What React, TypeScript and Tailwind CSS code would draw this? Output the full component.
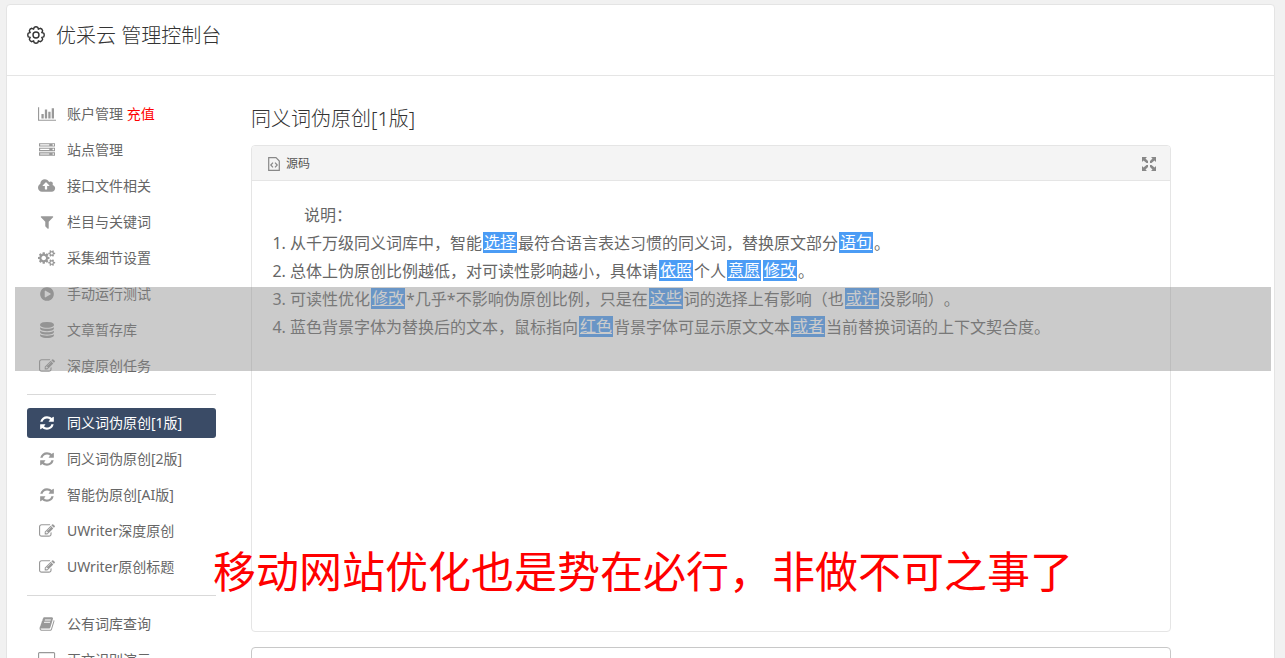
import type { ReactNode } from "react";

interface IconShape {
  width: number;
  d: string;
}

// Glyphs sit on a 1792 unit em, wide ones have a larger advance
const ICONS: Record<string, IconShape> = {
  chart: {
    width: 2048,
    d: "M640 896v512h-256v-512h256zm384-512v1024h-256v-1024h256zm1024 1152v128h-2048v-1536h128v1408h1920zm-640-896v768h-256v-768h256zm384-384v1152h-256v-1152h256z",
  },
  server: {
    width: 1792,
    d: "M128 1408h1024v-128h-1024v128zm0-512h1024v-128h-1024v128zm1568 448q0-40-28-68t-68-28-68 28-28 68 28 68 68 28 68-28 28-68zm-1568-960h1024v-128h-1024v128zm1568 448q0-40-28-68t-68-28-68 28-28 68 28 68 68 28 68-28 28-68zm0-512q0-40-28-68t-68-28-68 28-28 68 28 68 68 28 68-28 28-68zm96 832v384h-1792v-384h1792zm0-512v384h-1792v-384h1792zm0-512v384h-1792v-384h1792z",
  },
  upload: {
    width: 1920,
    d: "M1280 864q0-14-9-23l-352-352q-9-9-23-9t-23 9l-351 351q-10 12-10 24 0 14 9 23t23 9h224v352q0 13 9.5 22.5t22.5 9.5h192q13 0 22.5-9.5t9.5-22.5v-352h224q13 0 22.5-9.5t9.5-22.5zm640 288q0 159-112.5 271.5t-271.5 112.5h-1088q-185 0-316.5-131.5t-131.5-316.5q0-130 70-240t188-165q-2-30-2-43 0-212 150-362t362-150q156 0 285.5 87t188.5 231q71-62 166-62 106 0 181 75t75 181q0 76-41 138 130 31 213.5 135.5t83.5 238.5z",
  },
  filter: {
    width: 1792,
    d: "M1595 295q17 41-14 70l-493 493v742q0 42-39 59-13 5-25 5-27 0-45-19l-256-256q-19-19-19-45v-486l-493-493q-31-29-14-70 17-39 59-39h1280q42 0 59 39z",
  },
  cogs: {
    width: 1920,
    d: "M896 896q0-106-75-181t-181-75-181 75-75 181 75 181 181 75 181-75 75-181zm768 512q0-52-38-90t-90-38-90 38-38 90q0 53 37.5 90.5t90.5 37.5 90.5-37.5 37.5-90.5zm0-1024q0-52-38-90t-90-38-90 38-38 90q0 53 37.5 90.5t90.5 37.5 90.5-37.5 37.5-90.5zm-384 421v185q0 10-7 19.5t-16 10.5l-155 24q-11 35-32 76 34 48 90 115 7 11 7 20 0 12-7 19-23 30-82.5 89.5t-78.5 59.5q-11 0-21-7l-115-90q-37 19-77 31-11 108-23 155-7 24-30 24h-186q-11 0-20-7.5t-10-17.5l-23-153q-34-10-75-31l-118 89q-7 7-20 7-11 0-21-8-144-133-144-160 0-9 7-19 10-14 41-53t47-61q-23-44-35-82l-152-24q-10-1-17-9.5t-7-19.5v-185q0-10 7-19.5t16-10.5l155-24q11-35 32-76-34-48-90-115-7-11-7-20 0-12 7-20 22-30 82-89t79-59q11 0 21 7l115 90q34-18 77-32 11-108 23-154 7-24 30-24h186q11 0 20 7.5t10 17.5l23 153q34 10 75 31l118-89q8-7 20-7 11 0 21 8 144 133 144 160 0 8-7 19-12 16-42 54t-45 60q23 48 34 82l152 23q10 2 17 10.5t7 19.5zm640 533v140q0 16-149 31-12 27-30 52 51 113 51 138 0 4-4 7-122 71-124 71-8 0-46-47t-52-68q-20 2-30 2t-30-2q-14 21-52 68t-46 47q-2 0-124-71-4-3-4-7 0-25 51-138-18-25-30-52-149-15-149-31v-140q0-16 149-31 13-29 30-52-51-113-51-138 0-4 4-7 4-2 35-20t59-34 30-16q8 0 46 46.5t52 67.5q20-2 30-2t30 2q51-71 92-112l6-2q4 0 124 70 4 3 4 7 0 25-51 138 17 23 30 52 149 15 149 31zm0-1024v140q0 16-149 31-12 27-30 52 51 113 51 138 0 4-4 7-122 71-124 71-8 0-46-47t-52-68q-20 2-30 2t-30-2q-14 21-52 68t-46 47q-2 0-124-71-4-3-4-7 0-25 51-138-18-25-30-52-149-15-149-31v-140q0-16 149-31 13-29 30-52-51-113-51-138 0-4 4-7 4-2 35-20t59-34 30-16q8 0 46 46.5t52 67.5q20-2 30-2t30 2q51-71 92-112l6-2q4 0 124 70 4 3 4 7 0 25-51 138 17 23 30 52 149 15 149 31z",
  },
  play: {
    width: 1792,
    d: "M896 128q209 0 385.5 103t279.5 279.5 103 385.5-103 385.5-279.5 279.5-385.5 103-385.5-103-279.5-279.5-103-385.5 103-385.5 279.5-279.5 385.5-103zm384 823q32-18 32-55t-32-55l-544-320q-31-19-64-1-32 19-32 56v640q0 37 32 56 16 8 32 8 17 0 32-9z",
  },
  database: {
    width: 1792,
    d: "M896 768q237 0 443-43t325-127v170q0 69-103 128t-280 93.5-385 34.5-385-34.5-280-93.5-103-128v-170q119 84 325 127t443 43zm0 768q237 0 443-43t325-127v170q0 69-103 128t-280 93.5-385 34.5-385-34.5-280-93.5-103-128v-170q119 84 325 127t443 43zm0-384q237 0 443-43t325-127v170q0 69-103 128t-280 93.5-385 34.5-385-34.5-280-93.5-103-128v-170q119 84 325 127t443 43zm0-1152q208 0 385 34.5t280 93.5 103 128v128q0 69-103 128t-280 93.5-385 34.5-385-34.5-280-93.5-103-128v-128q0-69 103-128t280-93.5 385-34.5z",
  },
  edit: {
    width: 1792,
    d: "M888 1184l116-116-152-152-116 116v56h96v96h56zm440-720q-16-16-33 1l-350 350q-17 17-1 33t33-1l350-350q17-17 1-33zm80 594v190q0 119-84.5 203.5t-203.5 84.5h-832q-119 0-203.5-84.5t-84.5-203.5v-832q0-119 84.5-203.5t203.5-84.5h832q63 0 117 25 15 7 18 23 3 17-9 29l-49 49q-14 14-32 8-23-6-45-6h-832q-66 0-113 47t-47 113v832q0 66 47 113t113 47h832q66 0 113-47t47-113v-126q0-13 9-22l64-64q15-15 35-7t20 29zm-96-738l288 288-672 672h-288v-288zm444 132l-92 92-288-288 92-92q28-28 68-28t68 28l152 152q28 28 28 68t-28 68z",
  },
  refresh: {
    width: 1792,
    d: "M1639 1056q0 5-1 7-64 268-268 434.5t-478 166.5q-146 0-282.5-55t-243.5-157l-129 129q-19 19-45 19t-45-19-19-45v-448q0-26 19-45t45-19h448q26 0 45 19t19 45-19 45l-137 137q71 66 161 102t187 36q134 0 250-65t186-179q11-17 53-117 8-23 30-23h192q13 0 22.5 9.5t9.5 22.5zm25-800v448q0 26-19 45t-45 19h-448q-26 0-45-19t-19-45 19-45l138-138q-148-137-349-137-134 0-250 65t-186 179q-11 17-53 117-8 23-30 23h-199q-13 0-22.5-9.5t-9.5-22.5v-7q65-268 270-434.5t480-166.5q146 0 284 55.5t245 156.5l130-129q19-19 45-19t45 19 19 45z",
  },
  book: {
    width: 1792,
    d: "M1703 478q40 57 18 129l-275 906q-19 64-76.5 107.5t-122.5 43.5h-923q-77 0-148.5-53.5t-99.5-131.5q-24-67-2-127 0-4 3-27t4-37q1-8-3-21.5t-3-19.5q2-11 8-21t16.5-23.5 16.5-23.5q23-38 45-91.5t30-91.5q3-10 .5-30t-.5-28q3-11 17-28t17-23q21-36 42-92t25-90q1-9-2.5-32t.5-28q4-13 22-30.5t22-22.5q19-26 42.5-84.5t27.5-96.5q1-8-3-25.5t-2-26.5q2-8 9-18t18-23 17-21q8-12 16.5-30.5t15-35 16-36 19.5-32 26.5-23.5 36-11.5 47.5 5.5l-1 3q38-9 51-9h761q74 0 114 56t18 130l-274 906q-36 119-71.5 153.5t-128.5 34.5h-869q-27 0-38 15-11 16-1 43 24 70 144 70h923q29 0 56-15.5t35-41.5l300-987q7-22 5-57 38 15 59 43zm-1064 2q-4 13 2 22.5t20 9.5h608q13 0 25.5-9.5t16.5-22.5l21-64q4-13-2-22.5t-20-9.5h-608q-13 0-25.5 9.5t-16.5 22.5zm-83 256q-4 13 2 22.5t20 9.5h608q13 0 25.5-9.5t16.5-22.5l21-64q4-13-2-22.5t-20-9.5h-608q-13 0-25.5 9.5t-16.5 22.5z",
  },
  desktop: {
    width: 1920,
    d: "M1792 992v-832q0-13-9.500-22.500t-22.500-9.500h-1600q-13 0-22.500 9.500t-9.500 22.500v832q0 13 9.500 22.500t22.500 9.500h1600q13 0 22.500-9.500t9.500-22.500zm128-832v1088q0 66-47 113t-113 47h-544q0 37 16 77.500t32 71 16 43.500q0 26-19 45t-45 19h-512q-26 0-45-19t-19-45q0-14 16-44t32-70 16-78h-544q-66 0-113-47t-47-113v-1088q0-66 47-113t113-47h1600q66 0 113 47t47 113z",
  },
};

interface NavItem {
  icon: string;
  label: string;
  tag?: string;
  active?: boolean;
}

const NAV_GROUPS: NavItem[][] = [
  [
    { icon: "chart", label: "账户管理", tag: "充值" },
    { icon: "server", label: "站点管理" },
    { icon: "upload", label: "接口文件相关" },
    { icon: "filter", label: "栏目与关键词" },
    { icon: "cogs", label: "采集细节设置" },
    { icon: "play", label: "手动运行测试" },
    { icon: "database", label: "文章暂存库" },
    { icon: "edit", label: "深度原创任务" },
  ],
  [
    { icon: "refresh", label: "同义词伪原创[1版]", active: true },
    { icon: "refresh", label: "同义词伪原创[2版]" },
    { icon: "refresh", label: "智能伪原创[AI版]" },
    { icon: "edit", label: "UWriter深度原创" },
    { icon: "edit", label: "UWriter原创标题" },
  ],
  [
    { icon: "book", label: "公有词库查询" },
    { icon: "desktop", label: "正文识别演示" },
  ],
];

function NavIcon({ name }: { name: string }) {
  const { width, d } = ICONS[name];
  return (
    <svg viewBox={`0 0 ${width} 1792`} className="h-4 w-auto" fill="currentColor" aria-hidden="true">
      <path d={d} />
    </svg>
  );
}

function GearIcon() {
  return (
    <svg viewBox="0 0 18 18" className="size-[18px]" fill="none" stroke="currentColor" strokeWidth="1.4" aria-hidden="true">
      <path
        strokeLinejoin="round"
        d="M7.200 1.300Q9 .3 10.800 1.300L11.400 3.200L13.200 2.300Q15.200 2.800 15.700 4.800L14.800 6.600L16.700 7.200Q17.700 9 16.700 10.800L14.800 11.400L15.700 13.200Q15.200 15.200 13.200 15.700L11.400 14.800L10.800 16.700Q9 17.700 7.200 16.700L6.600 14.800L4.800 15.700Q2.800 15.200 2.300 13.200L3.200 11.400L1.300 10.800Q.3 9 1.300 7.200L3.200 6.600L2.300 4.800Q2.800 2.800 4.800 2.300L6.600 3.200Z"
      />
      <circle cx="9" cy="9" r="3" />
    </svg>
  );
}

function SourceIcon() {
  return (
    <svg viewBox="0 0 12 14" className="h-3.5 w-3" fill="none" stroke="#888" strokeWidth="1.2" aria-hidden="true">
      <path d="M.7.7h7.300l3.300 3.300v9.300H.7z" />
      <path d="M5 5.700 2.800 8 5 10.300M7 5.700 9.200 8 7 10.300" />
    </svg>
  );
}

function ExpandIcon() {
  return (
    <svg viewBox="0 0 14 14" className="size-3.5" fill="#888" aria-hidden="true">
      <path d="M0 0h5L3.500 1.500 6 4v2H4.500L1.500 3.500 0 5zM14 0v5l-1.500-1.500L9.500 6H8V4l2.500-2.500L9 0zM0 14V9l1.500 1.500L4.500 8H6v2l-2.500 2.500L5 14zM14 14H9l1.500-1.500L8 10V8h1.500l3 2.500L14 9z" />
    </svg>
  );
}

function Swap({ children }: { children: ReactNode }) {
  return (
    <span className="mx-px inline-block h-[21px] bg-[#4b9cf5] px-px align-top mt-[3px] leading-[21px] text-white underline">
      {children}
    </span>
  );
}

function Sidebar() {
  return (
    <nav className="w-[189px] shrink-0 pt-[23px] text-sm">
      {NAV_GROUPS.map((group, i) => (
        <div key={i}>
          {i > 0 && <hr className="my-[13px] border-[#d9d9d9]" />}
          <ul className="flex flex-col gap-1.5">
            {group.map((item) => (
              <li key={item.label}>
                <a
                  href="#"
                  className={`flex h-[30px] items-center gap-2.5 rounded-[3px] px-2.5 ${
                    item.active ? "bg-[#3a4b66] text-white" : "text-[#666]"
                  }`}
                >
                  <span className={`flex w-5 shrink-0 justify-center ${item.active ? "text-white" : "text-[#999]"}`}>
                    <NavIcon name={item.icon} />
                  </span>
                  <span>
                    {item.label}
                    {item.tag && <span className="text-[#f00]"> {item.tag}</span>}
                  </span>
                </a>
              </li>
            ))}
          </ul>
        </div>
      ))}
    </nav>
  );
}

function Editor() {
  return (
    <section className="rounded-[4px] border border-[#e5e5e5]">
      <div className="flex h-[35px] items-center justify-between rounded-t-[3px] border-b border-[#e5e5e5] bg-[#f4f4f4] pt-0.5 pr-3.5 pl-4">
        <button type="button" className="flex items-center gap-1.5 text-xs text-[#555]">
          <SourceIcon />
          源码
        </button>
        <button type="button" aria-label="全屏">
          <ExpandIcon />
        </button>
      </div>
      <div className="min-h-[450px] p-5 text-base leading-7 text-[#666]">
        <p className="indent-8">说明：</p>
        <ol className="list-decimal pl-[18px]">
          <li>
            从千万级同义词库中，智能<Swap>选择</Swap>最符合语言表达习惯的同义词，替换原文部分<Swap>语句</Swap>。
          </li>
          <li>
            总体上伪原创比例越低，对可读性影响越小，具体请<Swap>依照</Swap>个人<Swap>意愿</Swap><Swap>修改</Swap>。
          </li>
          <li>
            可读性优化<Swap>修改</Swap>*几乎*不影响伪原创比例，只是在<Swap>这些</Swap>词的选择上有影响（也<Swap>或许</Swap>没影响）。
          </li>
          <li>
            蓝色背景字体为替换后的文本，鼠标指向<Swap>红色</Swap>背景字体可显示原文文本<Swap>或者</Swap>当前替换词语的上下文契合度。
          </li>
        </ol>
      </div>
    </section>
  );
}

export default function App() {
  return (
    <div
      lang="zh-CN"
      className="relative min-h-screen overflow-hidden bg-[#f1f1f1] px-1.5 pt-1 pr-2.5 font-['Noto_Sans','Noto_Sans_CJK_SC',sans-serif] [text-spacing-trim:space-all]"
    >
      <div className="min-h-screen rounded-t-[4px] border border-[#e4e4e4] bg-white">
        <header className="flex h-[71px] items-start gap-[11px] border-b border-[#e5e5e5] px-5 pt-[17px] text-[#333]">
          <span className="flex h-[26px] items-center">
            <GearIcon />
          </span>
          <h1 className="text-xl font-light">优采云 管理控制台</h1>
        </header>
        <div className="flex gap-[35px] pr-[103px] pl-5">
          <Sidebar />
          <main className="min-w-0 flex-1 pt-[29px]">
            <h2 className="mb-3 text-xl font-light text-[#333]">同义词伪原创[1版]</h2>
            <Editor />
            <textarea
              aria-label="原文"
              className="mt-[15px] block h-40 w-full resize-none rounded-[4px] border border-[#c8c8c8] bg-white p-3 text-sm outline-none"
            />
          </main>
        </div>
      </div>
      <div className="pointer-events-none absolute top-[287px] right-3.5 left-[15px] h-[84px] bg-[#8e8e8e]/[.46]" />
      <p className="pointer-events-none absolute top-[540px] left-[213px] text-[43px] leading-[64px] whitespace-nowrap text-[#f00]">
        移动网站优化也是势在必行，非做不可之事了
      </p>
    </div>
  );
}
